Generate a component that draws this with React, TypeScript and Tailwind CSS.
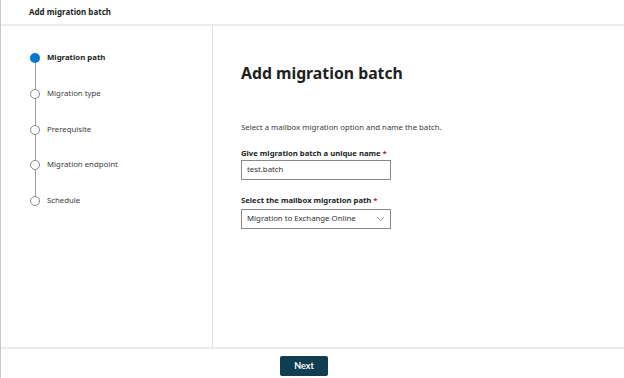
const STEPS = ["Migration path", "Migration type", "Prerequisite", "Migration endpoint", "Schedule"];

export default function App() {
  return (
    <div className="flex h-[378px] w-[624px] flex-col overflow-hidden border-l border-[#c8c8c8] bg-white font-['Noto_Sans',sans-serif] text-[#323130]">
      <div className="flex h-[26px] shrink-0 items-center border-b-2 border-[#ececec] pl-[28px]">
        <span className="text-[8px] font-bold text-[#201f1e]">Add migration batch</span>
      </div>

      <div className="flex min-h-0 flex-1">
        <div className="w-[212px] shrink-0 border-r border-[#e1e1e1] pl-[29px] pt-[27px]">
          {STEPS.map((step, i) => (
            <div key={i}>
              <div className="flex h-[10px] items-center gap-[7px]">
                {i === 0 ? (
                  <div className="h-[10px] w-[10px] rounded-full bg-[#0078d4]" />
                ) : (
                  <div className="h-[10px] w-[10px] rounded-full border border-[#8a8886]" />
                )}
                <span className={i === 0 ? "text-[7.8px] font-bold text-[#201f1e]" : "text-[7.8px] text-[#3b3a39]"}>{step}</span>
              </div>
              {i < STEPS.length - 1 && <div className="ml-[4.5px] h-[25.75px] w-px bg-[#a19f9d]" />}
            </div>
          ))}
        </div>

        <div className="flex-1 pl-[28px] pt-[36px]">
          <h1 className="text-[15.8px] font-bold leading-[22px] text-[#201f1e]">Add migration batch</h1>
          <p className="mt-[37px] text-[7.8px] leading-[12px] text-[#3b3a39]">Select a mailbox migration option and name the batch.</p>

          <div className="mt-[14px] text-[7.7px] font-bold leading-[12px] text-[#201f1e]">
            Give migration batch a unique name <span className="text-[#a4262c]">*</span>
          </div>
          <div className="mt-[1px] flex h-[20px] w-[150px] items-center border border-[#8a8886] px-[5px] text-[7.8px] text-[#323130]">
            test.batch
          </div>

          <div className="mt-[14px] text-[7.7px] font-bold leading-[12px] text-[#201f1e]">
            Select the mailbox migration path <span className="text-[#a4262c]">*</span>
          </div>
          <div className="mt-[3px] flex h-[20px] w-[150px] items-center justify-between border border-[#8a8886] pl-[5px] pr-[5px] text-[7.8px] text-[#323130]">
            <span>Migration to Exchange Online</span>
            <svg width="9" height="6" viewBox="0 0 9 6" fill="none">
              <path d="M1 1l3.5 3.5L8 1" stroke="#8a8886" strokeWidth="0.9" />
            </svg>
          </div>
        </div>
      </div>

      <div className="flex h-[31px] shrink-0 items-start border-t-2 border-[#ececec] pl-[279px] pt-[7px]">
        <button className="flex h-[20px] w-[48px] items-center justify-center rounded-[2px] bg-[#0f3d52] font-['Lato',sans-serif] text-[9px] font-bold text-white">
          Next
        </button>
      </div>
    </div>
  );
}
